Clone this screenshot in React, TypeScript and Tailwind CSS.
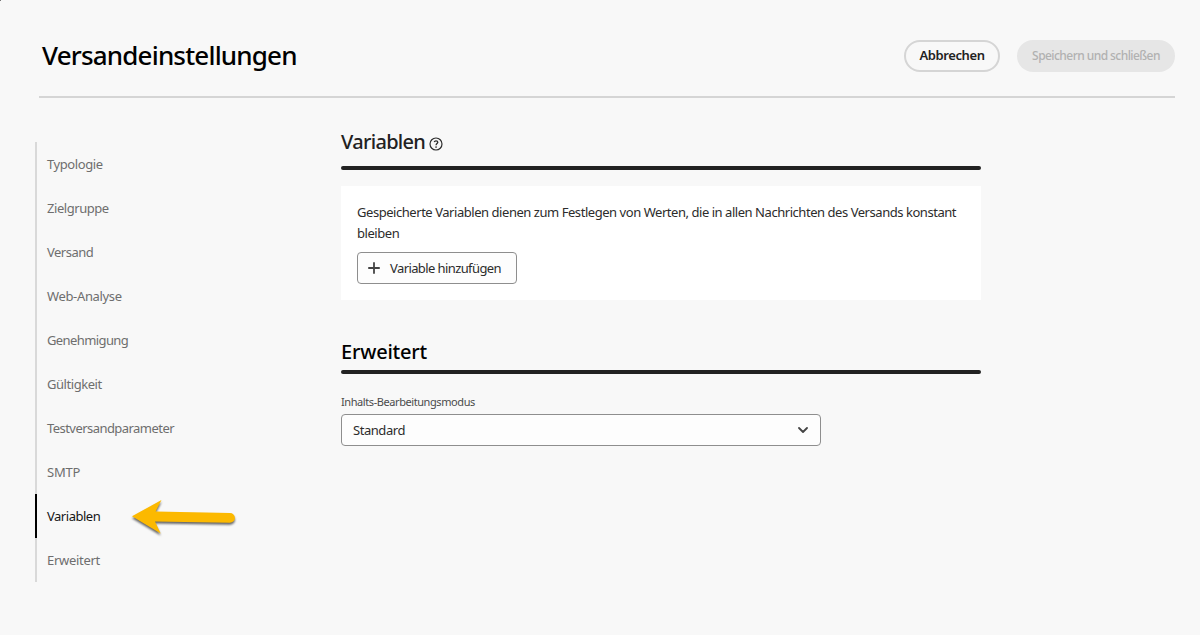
const navItems = [
  { label: 'Typologie', tracking: 'tracking-[-0.42px]' },
  { label: 'Zielgruppe', tracking: 'tracking-[-0.45px]' },
  { label: 'Versand', tracking: 'tracking-[-0.5px]' },
  { label: 'Web-Analyse', tracking: 'tracking-[-0.35px]' },
  { label: 'Genehmigung', tracking: 'tracking-[-0.6px]' },
  { label: 'Gültigkeit', tracking: 'tracking-[-0.45px]' },
  { label: 'Testversandparameter', tracking: 'tracking-[-0.55px]' },
  { label: 'SMTP', tracking: 'tracking-[-0.2px]' },
  { label: 'Variablen', tracking: 'tracking-[-0.48px]', active: true },
  { label: 'Erweitert', tracking: 'tracking-[-0.3px]' },
];

function HelpIcon() {
  return (
    <svg width="14" height="14" viewBox="0 0 14 14" fill="none" stroke="#2c2c2c" className="mt-1 shrink-0">
      <circle cx="7" cy="7" r="6" strokeWidth="1.2" />
      <path d="M5.2 5c.3-.8.9-1.2 1.8-1.2 1.1 0 1.8.6 1.8 1.5 0 1.2-1.7 1.4-1.7 2.9" strokeWidth="1.3" />
      <circle cx="7.05" cy="10" r=".85" fill="#2c2c2c" stroke="none" />
    </svg>
  );
}

function Arrow() {
  return (
    <svg
      width="112"
      height="46"
      viewBox="128 494 112 46"
      className="pointer-events-none absolute left-[91px] top-0 drop-shadow-[0px_2px_1px_rgba(0,0,0,0.6)]"
    >
      <path
        d="M132 516.3 L161.5 500 L155.6 511.6 L230 513 A4.8 4.8 0 0 1 230 522.8 L155 521.6 L160.7 533.4 Z"
        fill="#fcb900"
      />
    </svg>
  );
}

export default function App() {
  return (
    <div className="relative h-[635px] w-[1200px] overflow-hidden bg-[#f8f8f8] font-['Noto_Sans',sans-serif] text-[#2c2c2c]">
      <span className="absolute left-0 top-0 size-px bg-[#777]" />
      <header className="ml-[39px] mr-[25px] flex h-[98px] items-start justify-between border-b-2 border-[#d5d5d5] pl-[3px]">
        <h1 className="mt-[37px] whitespace-nowrap text-[26px] font-medium leading-9 tracking-[-0.82px] text-black">
          Versandeinstellungen
        </h1>
        <div className="mt-10 flex gap-[17px]">
          <button className="flex h-8 w-24 items-center justify-center whitespace-nowrap rounded-full border-2 border-[#d5d5d5] pb-0.5 text-[13px] font-semibold leading-5 tracking-[-0.4px] text-[#222]">
            Abbrechen
          </button>
          <button className="flex h-8 w-[158px] items-center justify-center whitespace-nowrap rounded-full bg-[#e6e6e6] text-[12px] font-medium leading-5 tracking-[-0.56px] text-[#b1b1b1]">
            Speichern und schließen
          </button>
        </div>
      </header>

      <div className="flex">
        <nav className="ml-[35px] mt-11 w-[306px] shrink-0">
          {navItems.map((item) => (
            <div
              key={item.label}
              className={`relative flex h-11 items-center whitespace-nowrap border-l-2 pl-[10px] text-[13px] leading-5 ${item.tracking} ${
                item.active ? 'border-black text-[#161616]' : 'border-[#d9d9d9] text-[#6e6e6e]'
              }`}
            >
              <span>{item.label}</span>
              {item.active && <Arrow />}
            </div>
          ))}
        </nav>

        <main className="w-[640px]">
          <section>
            <div className="mt-[30px] flex h-[28px] items-center gap-1">
              <h2 className="whitespace-nowrap text-[20px] font-medium leading-7 tracking-[-0.7px] text-[#222]">Variablen</h2>
              <HelpIcon />
            </div>
            <div className="mt-[10px] h-1 rounded-full bg-[#222]" />
            <div className="mt-4 h-[114px] bg-white px-4 pt-4">
              <p className="whitespace-nowrap font-['Noto_Sans_SemiCondensed','Noto_Sans',sans-serif] text-[13px] leading-[21px] tracking-[-0.455px]">
                Gespeicherte Variablen dienen zum Festlegen von Werten, die in allen Nachrichten des Versands konstant
                <br />
                bleiben
              </p>
              <button className="mt-2 flex h-8 w-40 items-center whitespace-nowrap rounded border border-[#8e8e8e] bg-[#fdfdfd] pl-[10px] pt-px text-[13px] tracking-[-0.6px]">
                <svg width="12" height="12" viewBox="0 0 12 12" stroke="#444" strokeWidth="1.8" strokeLinecap="round" className="mb-px mr-[10px]">
                  <path d="M6 .9v10.2M.9 6h10.2" />
                </svg>
                Variable hinzufügen
              </button>
            </div>
          </section>

          <section>
            <h2 className="mt-[38px] whitespace-nowrap text-[20px] font-medium leading-7 tracking-[-0.2px] text-black">Erweitert</h2>
            <div className="mt-1 h-1 rounded-full bg-[#222]" />
            <div className="mt-[19px] whitespace-nowrap text-[11px] leading-[18px] tracking-[-0.42px] text-[#4b4b4b]">
              Inhalts-Bearbeitungsmodus
            </div>
            <div className="mt-[3px] flex h-8 w-[480px] items-center justify-between rounded border border-[#8e8e8e] bg-[#fdfdfd] pl-[11px] pr-3 text-[13px] tracking-[-0.45px]">
              <span className="pt-px">Standard</span>
              <svg width="10" height="6" viewBox="0 0 10 6" fill="none" stroke="#444" strokeWidth="1.8" strokeLinecap="round" strokeLinejoin="round">
                <path d="M1 1l4 4 4-4" />
              </svg>
            </div>
          </section>
        </main>
      </div>
    </div>
  );
}
